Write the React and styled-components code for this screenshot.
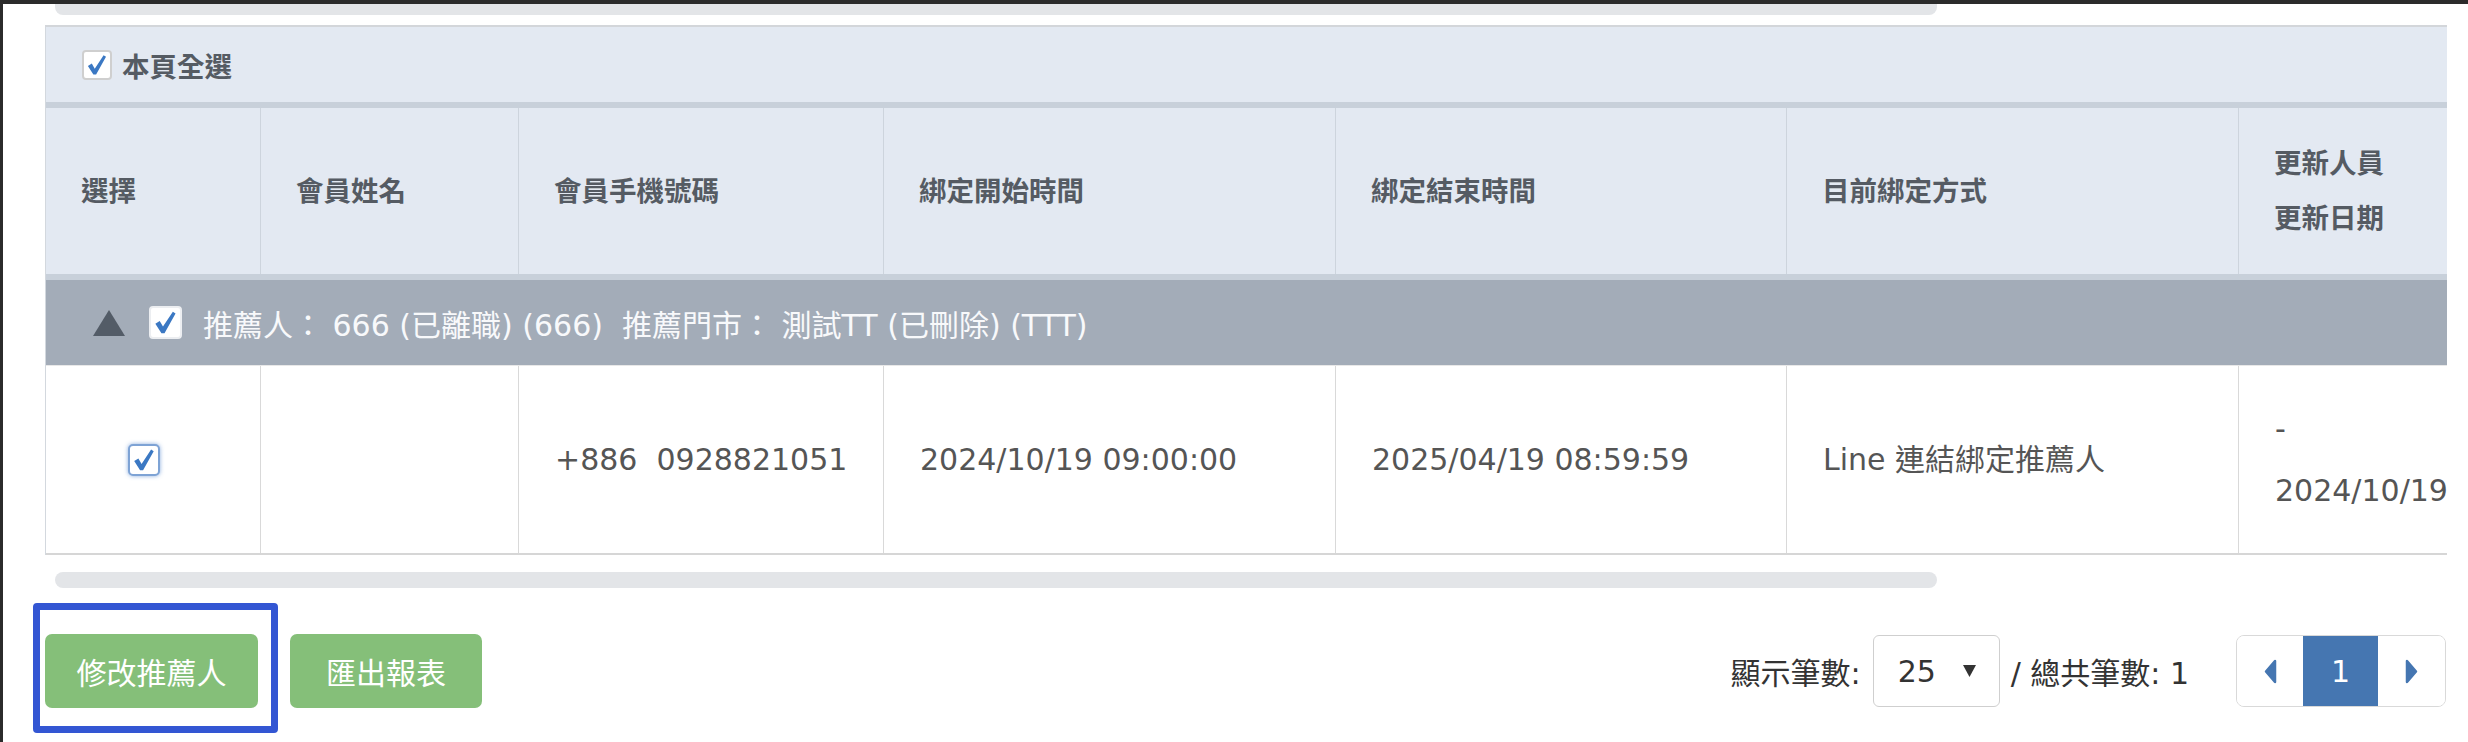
import React from "react";
import styled, { createGlobalStyle } from "styled-components";

const FONT = `"DejaVu Sans", "Noto Sans CJK TC", sans-serif`;

const GlobalStyle = createGlobalStyle`
  html, body { margin: 0; padding: 0; }
  body {
    background: #2b2b2b;
    overflow: hidden;
    font-family: ${FONT};
  }
`;

const COLS = "214px 258px 365px 452px 451px 452px 452px";

const Screen = styled.div`
  width: 2468px;
  height: 742px;
  box-sizing: border-box;
  padding: 4px 0 0 3px;
  background: #2b2b2b;
  overflow: hidden;
`;

const Panel = styled.div`
  width: 2465px;
  height: 738px;
  box-sizing: border-box;
  padding-left: 42px;
  background: #fff;
  display: flex;
  flex-direction: column;
`;

const Scrollbar = styled.div`
  margin-left: 10px;
  width: 1882px;
  height: ${(p) => p.$h}px;
  margin-top: ${(p) => p.$mt || 0}px;
  margin-bottom: ${(p) => p.$mb || 0}px;
  background: #e3e5e8;
  border-radius: ${(p) => p.$radius};
  flex: none;
`;

const TableWrap = styled.div`
  width: 2401px;
  overflow: hidden;
  border-top: 2px solid #d3d6da;
  border-left: 1px solid #d3d8de;
  flex: none;
`;

const SelectAllBar = styled.div`
  height: 75px;
  background: #e3e9f2;
  display: flex;
  align-items: center;
  padding-left: 36px;
  gap: 10px;
  width: 2645px;
`;

const BoldLabel = styled.span`
  font-size: 27.5px;
  font-weight: 700;
  color: #555b63;
`;

const CheckBox = styled.span`
  width: ${(p) => p.$size}px;
  height: ${(p) => p.$size}px;
  box-sizing: border-box;
  background: #fff;
  border: 2px solid ${(p) => p.$border};
  border-radius: ${(p) => (p.$focus ? 5 : 4)}px;
  box-shadow: ${(p) => (p.$focus ? "0 0 4px rgba(90,140,210,0.7)" : "none")};
  display: inline-flex;
  align-items: center;
  justify-content: center;
  flex: none;
`;

const HeaderRow = styled.div`
  display: grid;
  grid-template-columns: ${COLS};
  height: 166px;
  background: #e3e9f2;
  border-top: 6px solid #c8d0da;
  border-bottom: 6px solid #c8d0da;
`;

const HeaderCell = styled.div`
  display: flex;
  flex-direction: column;
  justify-content: center;
  padding-left: 35px;
  border-left: ${(p) => (p.$first ? "none" : "1px solid #cdd4dd")};
  font-size: 27.5px;
  font-weight: 700;
  color: #555b63;
  line-height: 55px;
  white-space: nowrap;
`;

const GroupRow = styled.div`
  height: 85px;
  width: 2645px;
  background: #a3acb8;
  display: flex;
  align-items: center;
  padding-left: 47px;
  color: #f8f9fb;
  font-size: 30px;
  white-space: pre;
`;

const Triangle = styled.span`
  width: 0;
  height: 0;
  border-left: 16px solid transparent;
  border-right: 16px solid transparent;
  border-bottom: 26px solid #535c67;
  margin-right: 24px;
  flex: none;
`;

const GroupCheck = styled.span`
  margin-right: 21px;
  display: inline-flex;
`;

const DataRow = styled.div`
  display: grid;
  grid-template-columns: ${COLS};
  height: 187px;
  border-top: 1px solid #e8e8e8;
  border-bottom: 2px solid #d6d6d6;
  background: #fff;
`;

const DataCell = styled.div`
  display: flex;
  flex-direction: column;
  justify-content: center;
  align-items: ${(p) => (p.$center ? "center" : "flex-start")};
  padding-left: ${(p) => (p.$center ? 0 : 36)}px;
  padding-right: ${(p) => (p.$center ? 19 : 0)}px;
  border-left: ${(p) => (p.$first ? "none" : "1.5px solid #d9d9d9")};
  font-size: 30px;
  color: #555;
  line-height: 62px;
  white-space: pre;
`;

const Footer = styled.div`
  width: 2401px;
  margin-top: 46px;
  display: flex;
  justify-content: space-between;
  align-items: center;
`;

const ButtonGroup = styled.div`
  display: flex;
  gap: 32px;
`;

const Highlight = styled.div`
  position: relative;
  display: flex;
  &::after {
    content: "";
    position: absolute;
    left: -12px;
    top: -31px;
    right: -20px;
    bottom: -25px;
    border: 7px solid #3356d3;
    border-radius: 4px;
    pointer-events: none;
  }
`;

const ActionButton = styled.button`
  width: ${(p) => p.$w}px;
  height: 74px;
  border: none;
  border-radius: 7px;
  background: #85bf79;
  color: #fff;
  font-family: ${FONT};
  font-size: 30px;
  padding: 0;
  cursor: pointer;
`;

const Pager = styled.div`
  display: flex;
  align-items: center;
  color: #333;
  font-size: 30px;
  white-space: pre;
`;

const SizeSelect = styled.div`
  width: 127px;
  height: 72px;
  box-sizing: border-box;
  margin-left: 12px;
  border: 1.5px solid #cfcfcf;
  border-radius: 6px;
  display: flex;
  align-items: center;
  padding-left: 24px;
  gap: 26px;
  color: #333;
`;

const TotalText = styled.span`
  margin-left: 11px;
`;

const Pagination = styled.div`
  margin-left: 47px;
  height: 72px;
  box-sizing: border-box;
  display: flex;
  border: 1.5px solid #d9d9d9;
  border-radius: 8px;
  overflow: hidden;
`;

const PageBtn = styled.div`
  width: ${(p) => p.$w}px;
  display: flex;
  align-items: center;
  justify-content: center;
  background: ${(p) => (p.$active ? "#4576b1" : "#fff")};
  color: ${(p) => (p.$active ? "#fff" : "#4576b1")};
  font-size: 30px;
`;

const Check = ({ size }) => (
  <svg width={size} height={size} viewBox="0 0 30 30">
    <path
      d="M4.5 16.2 L9 13.4 L12.4 19.2 L22.6 3.8 L25.4 5.6 L14 26 L10.8 26 Z"
      fill="#3b78c3"
    />
  </svg>
);

const Caret = ({ dir }) => (
  <svg width="13" height="25" viewBox="0 0 13 25">
    <path
      d={dir === "left" ? "M11 2 L11 23 L2 12.5 Z" : "M2 2 L2 23 L11 12.5 Z"}
      fill="#4576b1"
      stroke="#4576b1"
      strokeWidth="2.5"
      strokeLinejoin="round"
    />
  </svg>
);

const DownArrow = () => (
  <svg width="15" height="14" viewBox="0 0 15 14">
    <path d="M1 1 L14 1 L7.5 13 Z" fill="#333" />
  </svg>
);

const headers = [
  ["選擇"],
  ["會員姓名"],
  ["會員手機號碼"],
  ["綁定開始時間"],
  ["綁定結束時間"],
  ["目前綁定方式"],
  ["更新人員", "更新日期"],
];

export default function App() {
  return (
    <>
      <GlobalStyle />
      <Screen>
        <Panel>
          <Scrollbar $h={11} $mb={10} $radius="0 0 8px 8px" />
          <TableWrap>
            <SelectAllBar>
              <CheckBox $size={30} $border="#cfcfcf">
                <Check size={26} />
              </CheckBox>
              <BoldLabel>本頁全選</BoldLabel>
            </SelectAllBar>
            <HeaderRow>
              {headers.map((lines, i) => (
                <HeaderCell key={i} $first={i === 0}>
                  {lines.map((l) => (
                    <span key={l}>{l}</span>
                  ))}
                </HeaderCell>
              ))}
            </HeaderRow>
            <GroupRow>
              <Triangle />
              <GroupCheck>
                <CheckBox $size={33} $border="#eceef1">
                  <Check size={29} />
                </CheckBox>
              </GroupCheck>
              <span>{"推薦人： 666 (已離職) (666)  推薦門市： 測試TT (已刪除) (TTT)"}</span>
            </GroupRow>
            <DataRow>
              <DataCell $first $center>
                <CheckBox $size={32} $border="#7ea3d5" $focus>
                  <Check size={28} />
                </CheckBox>
              </DataCell>
              <DataCell />
              <DataCell>{"+886  0928821051"}</DataCell>
              <DataCell>2024/10/19 09:00:00</DataCell>
              <DataCell>2025/04/19 08:59:59</DataCell>
              <DataCell>Line 連結綁定推薦人</DataCell>
              <DataCell>
                <span>-</span>
                <span>2024/10/19 09:00:00</span>
              </DataCell>
            </DataRow>
          </TableWrap>
          <Scrollbar $h={16} $mt={17} $radius="8px" />
          <Footer>
            <ButtonGroup>
              <Highlight>
                <ActionButton $w={213}>修改推薦人</ActionButton>
              </Highlight>
              <ActionButton $w={192}>匯出報表</ActionButton>
            </ButtonGroup>
            <Pager>
              <span>顯示筆數:</span>
              <SizeSelect>
                <span>25</span>
                <DownArrow />
              </SizeSelect>
              <TotalText>/ 總共筆數: 1</TotalText>
              <Pagination>
                <PageBtn $w={66}>
                  <Caret dir="left" />
                </PageBtn>
                <PageBtn $w={75} $active>
                  1
                </PageBtn>
                <PageBtn $w={67}>
                  <Caret dir="right" />
                </PageBtn>
              </Pagination>
            </Pager>
          </Footer>
        </Panel>
      </Screen>
    </>
  );
}
